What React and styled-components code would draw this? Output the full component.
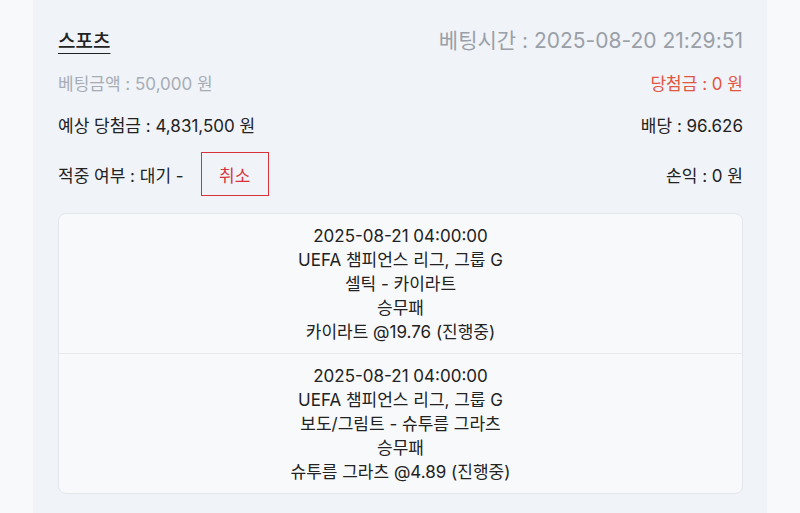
import React from 'react'
import styled, { createGlobalStyle } from 'styled-components'

const GlobalStyle = createGlobalStyle`
  html, body {
    margin: 0;
    padding: 0;
    background: #f8f9fb;
  }
  body {
    font-family: Inter, "Noto Sans CJK KR", sans-serif;
    color: #222;
  }
`

const picks = [
  {
    time: '2025-08-21 04:00:00',
    league: 'UEFA 챔피언스 리그, 그룹 G',
    match: '셀틱 - 카이라트',
    market: '승무패',
    pick: '카이라트 @19.76 (진행중)',
  },
  {
    time: '2025-08-21 04:00:00',
    league: 'UEFA 챔피언스 리그, 그룹 G',
    match: '보도/그림트 - 슈투름 그라츠',
    market: '승무패',
    pick: '슈투름 그라츠 @4.89 (진행중)',
  },
]

const App = () => {
  return (
    <>
      <GlobalStyle />
      <Page>
        <Panel>
          <HeadRow>
            <Category>스포츠</Category>
            <BetTime>베팅시간 : 2025-08-20 21:29:51</BetTime>
          </HeadRow>
          <InfoRow gap={6}>
            <InfoText muted>베팅금액 : 50,000 원</InfoText>
            <InfoText red>당첨금 : 0 원</InfoText>
          </InfoRow>
          <InfoRow gap={0}>
            <InfoText>예상 당첨금 : 4,831,500 원</InfoText>
            <InfoText>배당 : 96.626</InfoText>
          </InfoRow>
          <StatusRow>
            <StatusLeft>
              <InfoText>적중 여부 : 대기 -</InfoText>
              <CancelButton>취소</CancelButton>
            </StatusLeft>
            <InfoText>손익 : 0 원</InfoText>
          </StatusRow>
          <PickCard>
            {picks.map((p, i) => (
              <PickItem key={i}>
                <PickLine>{p.time}</PickLine>
                <PickLine>{p.league}</PickLine>
                <PickLine>{p.match}</PickLine>
                <PickLine>{p.market}</PickLine>
                <PickLine>{p.pick}</PickLine>
              </PickItem>
            ))}
          </PickCard>
        </Panel>
      </Page>
    </>
  )
}

const Page = styled.div`
  height: 513px;
  overflow: hidden;
  padding: 0 33px;
`

const Panel = styled.section`
  background: #f0f3f8;
  min-height: 540px;
  padding: 23px 24px 0 25px;
  box-sizing: border-box;
`

const HeadRow = styled.div`
  display: flex;
  justify-content: space-between;
  align-items: center;
  height: 32px;
`

const Category = styled.span`
  font-size: 19px;
  font-weight: 500;
  color: #222;
  text-decoration: underline;
  text-underline-offset: 5px;
  text-decoration-thickness: 1px;
`

const BetTime = styled.span`
  font-size: 21px;
  color: #9aa0a8;
`

const InfoRow = styled.div`
  display: flex;
  justify-content: space-between;
  align-items: center;
  height: 42px;
  margin-top: ${p => p.gap}px;
`

const InfoText = styled.span`
  font-size: 17px;
  color: ${p => (p.red ? '#e2553f' : p.muted ? '#a7adb5' : '#222')};
`

const StatusRow = styled.div`
  display: flex;
  justify-content: space-between;
  align-items: center;
  height: 44px;
  margin-top: 7px;
`

const StatusLeft = styled.div`
  display: flex;
  align-items: center;
  gap: 17px;
`

const CancelButton = styled.button`
  width: 68px;
  height: 44px;
  box-sizing: border-box;
  border: 1.5px solid #d8333b;
  background: transparent;
  color: #d8333b;
  font-family: inherit;
  font-size: 17px;
  padding: 0;
`

const PickCard = styled.div`
  margin-top: 17px;
  background: #f8f9fb;
  border: 1px solid #e3e7ed;
  border-radius: 8px;
  overflow: hidden;
`

const PickItem = styled.div`
  display: flex;
  flex-direction: column;
  align-items: center;
  padding: 10px 0 9px;
  & + & {
    border-top: 1px solid #e6e9ee;
  }
`

const PickLine = styled.div`
  font-size: 17px;
  line-height: 24px;
  color: #222;
`

export default App
